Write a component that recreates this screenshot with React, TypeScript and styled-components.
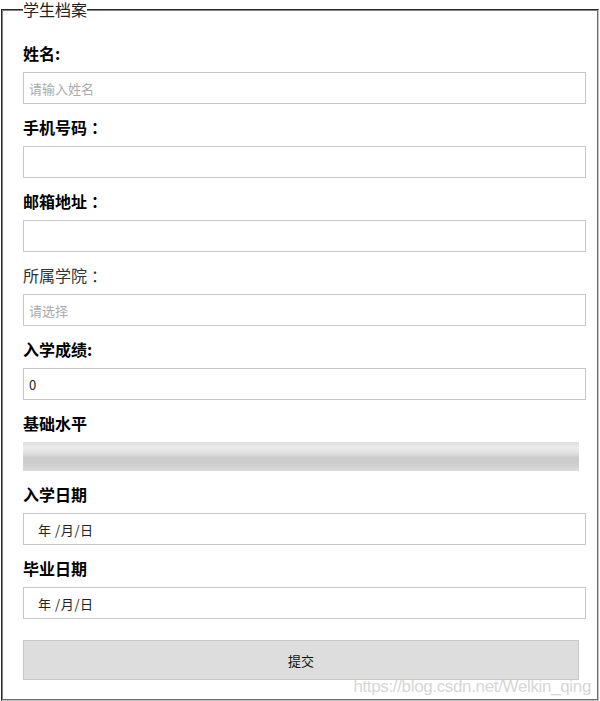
import React from "react";
import styled, { createGlobalStyle } from "styled-components";

const GlobalStyle = createGlobalStyle`
  html, body {
    margin: 0;
    padding: 0;
    background: #fff;
  }
  body {
    font-family: "Noto Sans CJK SC", "Microsoft YaHei", sans-serif;
    color: #000;
  }
`;

const Page = styled.div`
  position: relative;
  width: 600px;
  height: 701px;
  overflow: hidden;
`;

const Fieldset = styled.fieldset`
  box-sizing: border-box;
  margin: 0 0 0 1px;
  width: 598px;
  height: 701px;
  padding: 11px 11px 0 20px;
  border: 2px groove #c0c0c0;
  border-top-color: #808080;
  border-left-color: #808080;
`;

const Legend = styled.legend`
  padding: 0;
  font-size: 16px;
  line-height: 19px;
  color: #222;
`;

const Label = styled.label<{ $plain?: boolean }>`
  display: block;
  margin: 12px 0 8px;
  font-size: 16px;
  line-height: 22px;
  font-weight: ${(p) => (p.$plain ? 400 : 700)};
  color: ${(p) => (p.$plain ? "#333" : "#000")};
`;

const Colon = styled.span`
  margin-left: 4px;
`;

const TextInput = styled.input<{ $indent?: number }>`
  box-sizing: border-box;
  display: block;
  width: 100%;
  height: 32px;
  margin: 0;
  padding: 0 0 0 ${(p) => p.$indent ?? 5}px;
  border: 1px solid #c8c8c8;
  background: #fff;
  font-family: "Noto Sans CJK SC", sans-serif;
  font-size: 13px;
  color: #222;
  outline: none;

  &::placeholder {
    color: #aaa;
  }
`;

const DateInput = styled(TextInput)`
  letter-spacing: 0.6px;
`;

const Range = styled.input`
  -webkit-appearance: none;
  appearance: none;
  display: block;
  box-sizing: border-box;
  width: calc(100% - 7px);
  height: 29px;
  margin: 0;
  border: none;
  background: linear-gradient(
    to bottom,
    #dedede 0%,
    #ebebeb 20%,
    #e4e4e4 35%,
    #cbcbcb 55%,
    #cecece 75%,
    #d9d9d9 100%
  );

  &::-webkit-slider-thumb {
    -webkit-appearance: none;
    width: 0;
    height: 0;
  }
`;

const SubmitButton = styled.button`
  display: block;
  box-sizing: border-box;
  width: calc(100% - 7px);
  height: 40px;
  margin: 21px 0 0;
  border: 1px solid #c8c8c8;
  background: #ddd;
  font-family: "Noto Sans CJK SC", sans-serif;
  font-size: 13px;
  color: #111;
`;

const Watermark = styled.span`
  position: absolute;
  right: 9px;
  bottom: 4px;
  font-family: "Liberation Sans", Arial, sans-serif;
  font-size: 17px;
  letter-spacing: -0.35px;
  color: rgba(200, 200, 200, 0.75);
  pointer-events: none;
`;

const App: React.FC = () => {
  return (
    <Page>
      <GlobalStyle />
      <Fieldset>
        <Legend>学生档案</Legend>

        <Label>姓名:</Label>
        <TextInput placeholder="请输入姓名" />

        <Label>
          手机号码<Colon>：</Colon>
        </Label>
        <TextInput />

        <Label>
          邮箱地址<Colon>：</Colon>
        </Label>
        <TextInput />

        <Label $plain>
          所属学院<Colon>：</Colon>
        </Label>
        <TextInput placeholder="请选择" />

        <Label>入学成绩:</Label>
        <TextInput defaultValue="0" />

        <Label>基础水平</Label>
        <Range type="range" />

        <Label>入学日期</Label>
        <DateInput $indent={14} readOnly value="年 /月/日" />

        <Label>毕业日期</Label>
        <DateInput $indent={14} readOnly value="年 /月/日" />

        <SubmitButton type="button">提交</SubmitButton>
      </Fieldset>
      <Watermark>https://blog.csdn.net/Welkin_qing</Watermark>
    </Page>
  );
};

export default App;
